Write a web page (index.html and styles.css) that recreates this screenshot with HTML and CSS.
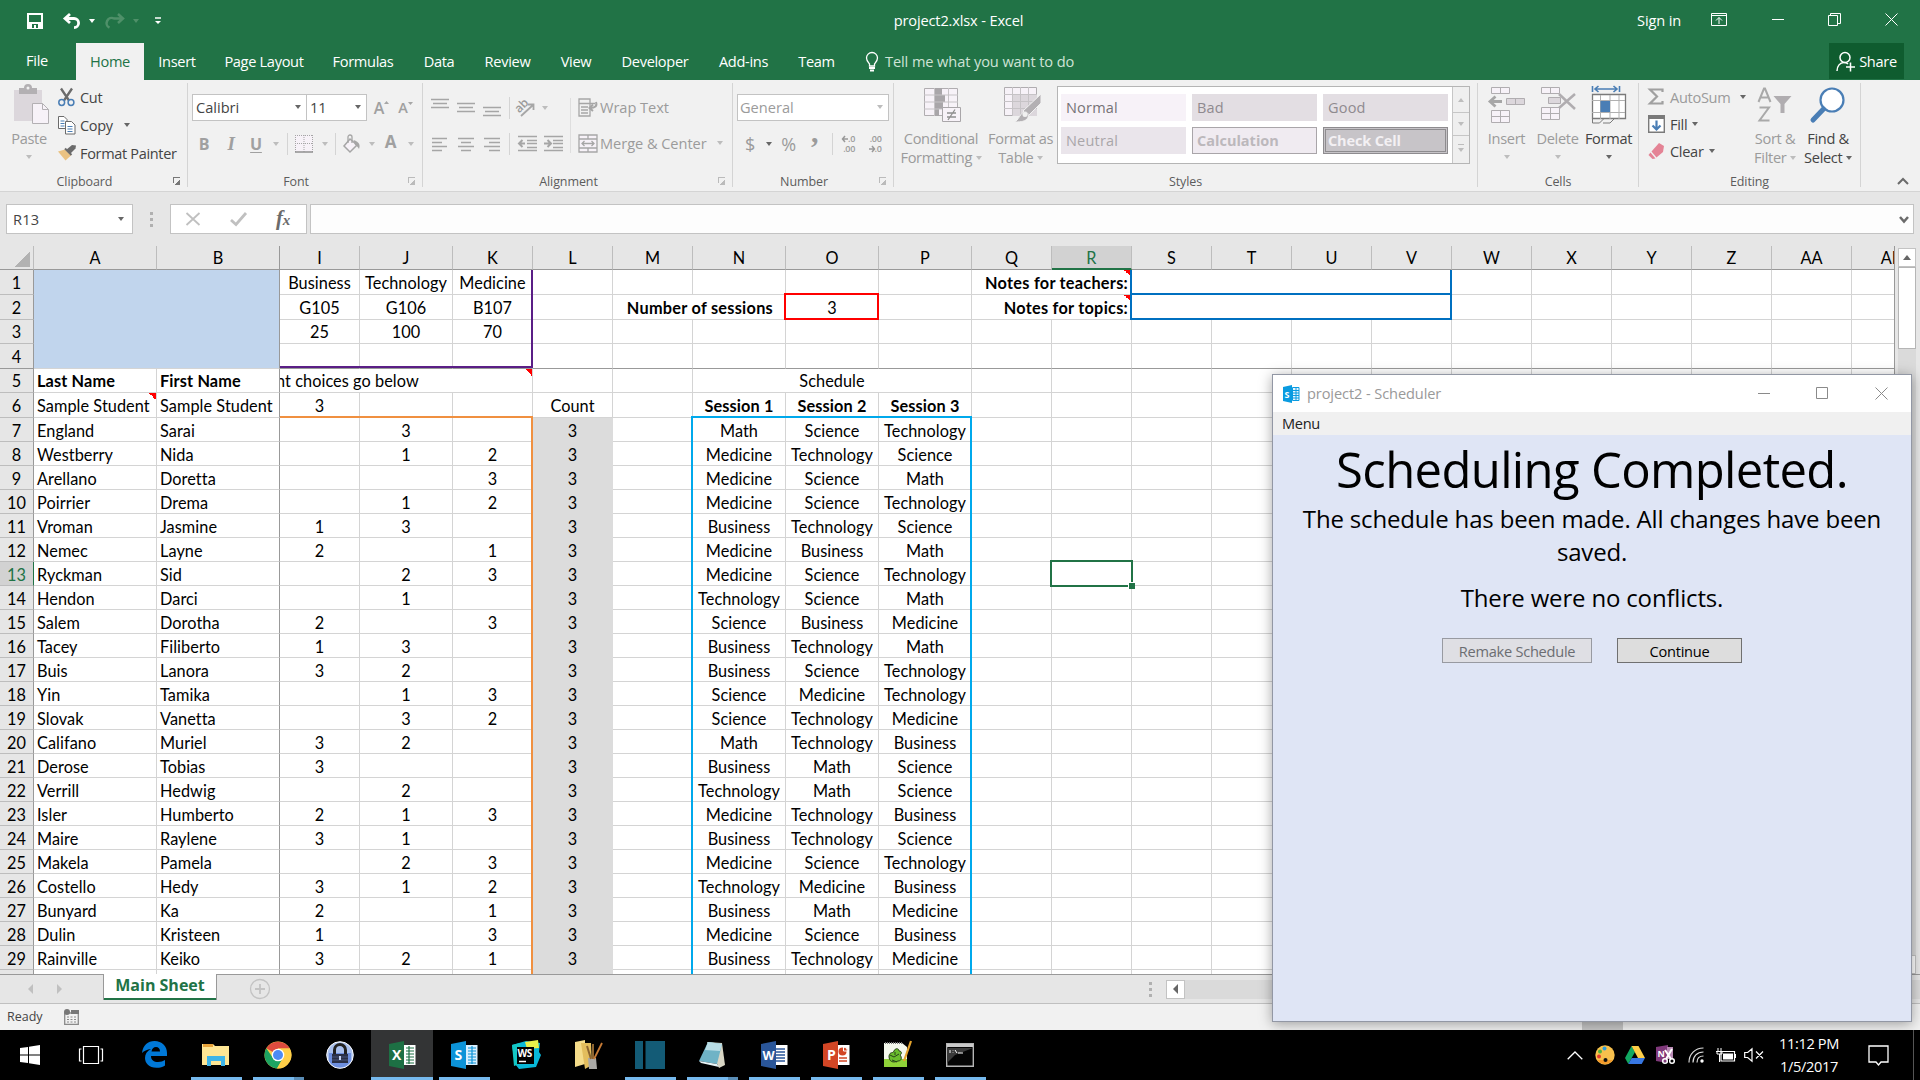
FILE: index.html
```html
<!DOCTYPE html>
<html lang="en">
<head>
<meta charset="utf-8">
<title>project2.xlsx - Excel</title>
<link rel="stylesheet" href="styles.css">
</head>
<body>
<div class="desktop">
  <header class="titlebar">
    <div class="quick">
      <svg width="16" height="16" viewBox="0 0 16 16"><path d="M1 1h14v14H1z" fill="none" stroke="#fff" stroke-width="2"/><path d="M1 9h14v6H1z" fill="#fff"/><path d="M5 11h6v4H5z" fill="#217346"/><path d="M7 12h2v3H7z" fill="#fff"/></svg>
      <svg width="19" height="16" viewBox="0 0 19 16"><path d="M7 1L2 5.500 7 10M2.500 5.500H11a4.600 4.600 0 0 1 0 9.200" fill="none" stroke="#fff" stroke-width="2.800"/></svg>
      <i class="caret white"></i>
      <svg width="19" height="16" viewBox="0 0 19 16"><path d="M12 1l5 4.500-5 4.500M16.500 5.500H8a4.600 4.600 0 0 0-4.500 9.200" fill="none" stroke="#4f9069" stroke-width="2.500"/></svg>
      <i class="caret redo"></i>
      <svg width="8" height="8" viewBox="0 0 8 8"><path d="M1 1h6" stroke="#fff" stroke-width="1.500"/><path d="M1 4h6L4 7z" fill="#fff"/></svg>
    </div>
    <div class="doc-name">project2.xlsx - Excel</div>
    <div class="win-tools">
      <span class="signin">Sign in</span>
      <svg width="16" height="14" viewBox="0 0 16 14" fill="none" stroke="#fff"><path d="M.5.500h15v12H.5zM.5 2.500h15M8 11V4.500M5 7.500l3-3 3 3"/></svg>
      <svg width="12" height="12" viewBox="0 0 12 12"><path d="M0 5.500h12" stroke="#fff"/></svg>
      <svg width="13" height="13" viewBox="0 0 13 13" fill="none" stroke="#fff"><path d="M.5 2.500h9v10h-9zM2.500 2V.5h10v10H10"/></svg>
      <svg width="13" height="13" viewBox="0 0 13 13"><path d="M.5.500l12 12m0-12l-12 12" stroke="#fff"/></svg>
    </div>
  </header>

  <nav class="tabs">
    <span class="file">File</span><span class="active">Home</span><span>Insert</span><span>Page Layout</span><span>Formulas</span><span>Data</span><span>Review</span><span>View</span><span>Developer</span><span>Add-ins</span><span>Team</span>
    <span class="tell">
      <svg width="14" height="20" viewBox="0 0 14 20" fill="none" stroke="#fff" stroke-width="1.300"><path d="M4.500 14v-2C3 10 1.500 8.500 1.500 6a5.500 5.500 0 0 1 11 0c0 2.500-1.500 4-3 6v2z"/><path d="M4 16h6M5 18.500h4" stroke-width="2"/></svg>
      Tell me what you want to do</span>
    <span class="share">
      <svg width="19" height="21" viewBox="0 0 19 21" fill="none" stroke="#fff" stroke-width="1.500"><circle cx="9" cy="6.500" r="5"/><path d="M1 20c0-5 3-8.500 7-8.500 2 0 3 .5 4 1.500M14.500 11.500v9M10 16h9"/></svg>
      Share</span>
  </nav>

  <section class="ribbon">
    <div class="group clipboard">
      <div class="body">
        <div class="big off paste">
          <svg width="36" height="40" viewBox="0 0 36 40"><path d="M0 5h28v31H0z" fill="#dcd7dc"/><path d="M5 3h5a4 4 0 0 1 8 0h5v6H5z" fill="#b3b0b3"/><circle cx="14" cy="3" r="1.500" fill="#f1f1f1"/><path d="M18.500 18.500h10l6 6v14h-16z" fill="#f7f2f8" stroke="#b3b0b3"/><path d="M28.500 18.500v6h6" fill="none" stroke="#b3b0b3"/></svg>
          <span>Paste</span><i class="caret light"></i>
        </div>
        <div class="stack">
          <div><svg width="17" height="19" viewBox="0 0 17 19" fill="none"><path d="M3 .5l8 12M14 .5l-8 12" stroke="#6b6b6b" stroke-width="2.300"/><circle cx="3.700" cy="14.500" r="2.900" stroke="#4a7eb5" stroke-width="1.500"/><circle cx="13" cy="14.500" r="2.900" stroke="#4a7eb5" stroke-width="1.500"/></svg>Cut</div>
          <div><svg width="18" height="19" viewBox="0 0 18 19" fill="#fff" stroke="#6b6b6b"><path d="M.5.500H6l3 3v9H.5z"/><path d="M2.500 5h4M2.500 7.500h4M2.500 10h4" stroke="#4a7eb5"/><path d="M7.500 5.500h6l3.500 3.500v9H7.500z"/><path d="M9.500 10.500h5M9.500 13h5M9.500 15.500h5" stroke="#4a7eb5"/></svg>Copy<i class="caret"></i></div>
          <div><svg width="18" height="16" viewBox="0 0 18 16"><path d="M8 5l6-5 4 .5-.5 3L12 9z" fill="#6b6b6b"/><path d="M0 6.500L7 4.500l6 6-5.500 5z" fill="#eac282"/><path d="M7 3.500l6.500 6.500" stroke="#6b6b6b" stroke-width="2"/></svg>Format Painter</div>
        </div>
      </div>
      <footer><span>Clipboard</span><i class="launch on"></i></footer>
    </div>

    <div class="group font">
      <div class="body col">
        <div class="row font-a">
          <span class="combo">Calibri<i class="caret"></i></span><span class="combo">11<i class="caret"></i></span>
          <span class="grow">A<svg width="5" height="3" viewBox="0 0 5 3"><path d="M0 3L2.500 0 5 3z" fill="#a6a6a6"/></svg></span>
          <span class="grow small">A<svg width="5" height="3" viewBox="0 0 5 3"><path d="M0 0L2.500 3 5 0z" fill="#a6a6a6"/></svg></span>
        </div>
        <div class="row font-b">
          <b>B</b><b class="serif">I</b><b class="under">U</b><i class="caret light"></i><i class="sep"></i>
          <svg width="18" height="18" viewBox="0 0 18 18"><path d="M0 0h18v17H0z" fill="#f7f2f8"/><path d="M.5 0v17M9 0v17M17.500 0v17M0 .5h18M0 8.500h18" stroke="#a6a6a6" stroke-dasharray="1 1"/><path d="M0 17h18" stroke="#8f8f8f" stroke-width="1.500"/></svg>
          <i class="caret light"></i><i class="sep"></i>
          <svg width="18" height="19" viewBox="0 0 18 19"><path d="M7 5l7 6-7 7-6-6z" fill="#f7f2f8" stroke="#a6a6a6" stroke-width="1.500"/><path d="M5 9V3a2 2 0 0 1 4 0v6" fill="none" stroke="#a6a6a6" stroke-width="1.300"/><path d="M10.500 6c6 2 7 5 5.500 9-1-2-2-3-4-4z" fill="#a6a6a6"/></svg>
          <i class="caret light"></i><b class="fa">A</b><i class="caret light"></i>
        </div>
      </div>
      <footer><span>Font</span><i class="launch"></i></footer>
    </div>

    <div class="group alignment">
      <div class="body align-grid">
        <div class="row al-a">
          <svg width="18" height="18" viewBox="0 0 18 18"><path d="M0 .5h18M2 4.500h14M0 8.500h18"/></svg>
          <svg width="18" height="18" viewBox="0 0 18 18"><path d="M0 4.500h18M2 8.500h14M0 12.500h18"/></svg>
          <svg width="18" height="18" viewBox="0 0 18 18"><path d="M0 8.500h18M2 12.500h14M0 16.500h18"/></svg>
          <i class="sep"></i>
          <svg class="orient" width="20" height="19" viewBox="0 0 20 19"><path d="M5 18L17 7M12 6.500h5.500V12" stroke-width="1.800"/><text x="1" y="14" transform="rotate(-45 4 12)" font-size="12" font-weight="600" stroke="none" fill="#9a9a9a">ab</text></svg>
          <i class="caret light near"></i>
        </div>
        <div class="row al-a">
          <svg width="18" height="16" viewBox="0 0 18 16"><path d="M1 2.500h15M1 6.500h10M1 10.500h15M1 14.500h10"/></svg>
          <svg width="18" height="16" viewBox="0 0 18 16"><path d="M1 2.500h16M4 6.500h10M1 10.500h16M4 14.500h10"/></svg>
          <svg width="18" height="16" viewBox="0 0 18 16"><path d="M1 2.500h16M6 6.500h11M1 10.500h16M6 14.500h11"/></svg>
          <i class="sep"></i>
          <svg width="19" height="17" viewBox="0 0 19 17"><path d="M0 1.500h19M9 5.500h10M9 8.500h10M9 12.500h10M0 15.500h19"/><path d="M1 8.500h6M4.500 5L1 8.500 4.500 12" stroke-width="2"/></svg>
          <svg width="19" height="17" viewBox="0 0 19 17"><path d="M0 1.500h19M9 5.500h10M9 8.500h10M9 12.500h10M0 15.500h19"/><path d="M0 8.500h6M3.500 5L7 8.500 3.500 12" stroke-width="2"/></svg>
        </div>
        <i class="tall-sep"></i>
        <div class="wrap off"><svg width="20" height="19" viewBox="0 0 20 19"><path d="M1 1h11v17H1zM1 5.500h16M3 9h7M3 12h7M3 15h7"/><path d="M18 4c1.500 4-1 6-6 6M15 6.500L11.500 10l3.500 3" stroke-width="2"/></svg>Wrap Text</div>
        <div class="merge off"><svg width="20" height="19" viewBox="0 0 20 19"><path d="M1 1h18v17H1zM1 5h18M1 14h18M10 1v4M10 14v4" fill="#f7f2f8"/><path d="M4 9.500h12M6.500 7L4 9.500 6.500 12M13.500 7L16 9.500 13.500 12"/></svg>Merge &amp; Center<i class="caret light"></i></div>
      </div>
      <footer><span>Alignment</span><i class="launch"></i></footer>
    </div>

    <div class="group number">
      <div class="body col">
        <div class="row"><span class="combo off">General<i class="caret light"></i></span></div>
        <div class="row num-b off">
          <span>$</span><i class="caret"></i><span>%</span><b>,</b><i class="sep"></i>
          <span class="dec"><span><svg width="6" height="6" viewBox="0 0 6 6"><path d="M0 3h6M3 0L.5 3 3 6" fill="none" stroke="#999" stroke-width="1.500"/></svg>.0</span><span>.00</span></span>
          <span class="dec"><span>.00</span><span><svg width="6" height="6" viewBox="0 0 6 6"><path d="M0 3h6M3 0l2.500 3L3 6" fill="none" stroke="#999" stroke-width="1.500"/></svg>.0</span></span>
        </div>
      </div>
      <footer><span>Number</span><i class="launch"></i></footer>
    </div>

    <div class="group styles">
      <div class="body">
        <div class="big off cond">
          <svg width="38" height="36" viewBox="0 0 38 36"><path d="M.5 1.500h33v27H.5z" fill="#f7f2f8" stroke="#b0adb0"/><path d="M10 1h8v7h-8zM10 8h11v7H10zM10 15h9v7h-9zM10 22h5v7h-5z" fill="#a9a6a9"/><path d="M0 8h34M0 15h34M0 22h34M10.500 1v28M24.500 1v28" stroke="#c6c3c6"/><path d="M18.500 20.500h18v14h-18z" fill="#f7f2f8" stroke="#a9a6a9"/><path d="M23 26h9M23 30h9M31 22.500l-7 10.500" stroke="#8f8f8f" stroke-width="1.300"/></svg>
          <span>Conditional</span><span>Formatting <i class="caret light"></i></span>
        </div>
        <div class="big off fmt-table">
          <svg width="38" height="36" viewBox="0 0 38 36"><path d="M.5.500h32v28H.5z" fill="#f7f2f8" stroke="#b0adb0"/><path d="M8 8h25v21H8z" fill="#dcd7dc"/><path d="M0 7.500h33M0 14.500h33M0 21.500h33M8.500 0v29M16.500 0v29M24.500 0v29" stroke="#c6c3c6"/><path d="M37 7v9L24 29l-5-5z" fill="#b3b0b3" stroke="#f1f1f1"/><path d="M10 35c5-1 6-10 11-10 4 0 4 5 2 7-3 3-8 3-13 3z" fill="#b3b0b3" stroke="#f1f1f1"/><circle cx="21" cy="27.500" r="2.500" fill="#f1f1f1"/></svg>
          <span>Format as</span><span>Table <i class="caret light"></i></span>
        </div>
        <div class="gallery">
          <div class="swatches">
            <span class="s-normal">Normal</span><span class="s-bad">Bad</span><span class="s-good">Good</span>
            <span class="s-neutral">Neutral</span><span class="s-calc">Calculation</span><span class="s-check">Check Cell</span>
          </div>
          <div class="scroller"><span><i class="caret light up"></i></span><span><i class="caret light"></i></span><span class="more"><i class="caret light"></i></span></div>
        </div>
      </div>
      <footer><span>Styles</span></footer>
    </div>

    <div class="group cells">
      <div class="body">
        <div class="big off"><svg width="38" height="38" viewBox="0 0 38 38" fill="#f7f2f8" stroke="#b0adb0"><path d="M3.500 1.500h18v6h-18zM12.500 1.500v6M3.500 24.500h18v12h-18zM12.500 24.500v12M3.500 30.500h18"/><path d="M18.500 12.500h18v6h-18zM27.500 12.500v6" fill="#dcd7dc"/><path d="M2 15.500h12M7.500 10.500L2 15.500l5.500 5" fill="none" stroke="#a6a6a6" stroke-width="2.800"/></svg><span>Insert</span><i class="caret light"></i></div>
        <div class="big off"><svg width="38" height="38" viewBox="0 0 38 38" fill="#f7f2f8" stroke="#b0adb0"><path d="M2.500 1.500h18v6h-18zM11.500 1.500v6M2.500 21.500h18v12h-18zM11.500 21.500v12M2.500 27.500h18"/><path d="M9.500 11.500h12v6h-12z" fill="#dcd7dc"/><path d="M20 8l16 15M36 8L20 22" fill="none" stroke="#b0adb0" stroke-width="2.500"/></svg><span>Delete</span><i class="caret light"></i></div>
        <div class="big"><svg width="36" height="38" viewBox="0 0 36 38" fill="none"><path d="M1.500 0v6M28.500 0v6M4 3h22M7.500 0L4 3l3.500 3M22.500 0L26 3l-3.500 3" stroke="#4a7eb5" stroke-width="1.600"/><path d="M1.500 8.500h33v24h-33z" fill="#fff" stroke="#7a7a7a" stroke-width="1.300"/><path d="M1 14.500h33M1 26.500h33M9.500 9v24M19 9v24M28 9v24" stroke="#b0b0b0"/><path d="M9.500 15h9.500v11H9.500z" fill="#4a7eb5"/><path d="M1.500 33v4h7l4-4M12 37h7l4-4" stroke="#7a7a7a"/></svg><span>Format</span><i class="caret"></i></div>
      </div>
      <footer><span>Cells</span></footer>
    </div>

    <div class="group editing">
      <div class="body">
        <div class="stack">
          <div class="off"><svg width="16" height="17" viewBox="0 0 16 17"><path d="M14.500 4V1.500H2L9 8.500l-7 7h12.500V13" fill="none" stroke="#a0a0a0" stroke-width="2.200"/></svg>AutoSum<i class="caret far"></i></div>
          <div><svg width="17" height="18" viewBox="0 0 17 18"><path d="M.7.700h15.600v16.600H.7z" fill="#fff" stroke="#7a7a7a" stroke-width="1.400"/><path d="M0 0h17v4H0z" fill="#7a7a7a"/><path d="M8.500 5.500v9M4.500 10.500l4 4 4-4" fill="none" stroke="#4a7eb5" stroke-width="2.200"/></svg>Fill<i class="caret"></i></div>
          <div><svg width="17" height="16" viewBox="0 0 17 16"><path d="M11 0l5 3-1 6-6.500 5.500-5-6z" fill="#e48395"/><path d="M2.500 9.500l5 6-3 .5L.5 12z" fill="#e48395"/></svg>Clear<i class="caret"></i></div>
        </div>
        <div class="big off sort"><svg width="36" height="36" viewBox="0 0 36 36"><path d="M1.500 15L7 1.500h1L13.500 15M3.500 10.500h8M2.500 20.500h9.500L2.500 33.500h10" fill="none" stroke="#a9a9a9" stroke-width="2"/><path d="M16.500 9h18l-7 8v9h-4v-9z" fill="#b0adb0"/></svg><span>Sort &amp;</span><span>Filter <i class="caret light"></i></span></div>
        <div class="big find"><svg width="36" height="36" viewBox="0 0 36 36"><circle cx="22" cy="13" r="11.500" fill="#fff" stroke="#4a7eb5" stroke-width="2.200"/><path d="M13.500 22L3 33" stroke="#4a7eb5" stroke-width="5" stroke-linecap="round"/></svg><span>Find &amp;</span><span>Select <i class="caret"></i></span></div>
      </div>
      <footer><span>Editing</span></footer>
    </div>
    <div class="collapse"><svg width="12" height="8" viewBox="0 0 12 8"><path d="M1 7l5-5 5 5" fill="none" stroke="#6b6b6b" stroke-width="2"/></svg></div>
  </section>

  <section class="formula">
    <div class="name-box">R13<i class="caret"></i></div>
    <div class="dots"><i></i><i></i><i></i></div>
    <div class="fx">
      <svg width="16" height="14" viewBox="0 0 16 14"><path d="M1.500 1l13 12m0-12l-13 12" stroke="#c0c0c0" stroke-width="1.800"/></svg>
      <svg width="17" height="14" viewBox="0 0 17 14"><path d="M1 8l5 4.500L16 1" fill="none" stroke="#c0c0c0" stroke-width="2.800"/></svg>
      <em>f<small>x</small></em>
    </div>
    <div class="input"><svg width="10" height="7" viewBox="0 0 10 7"><path d="M1 1l4 4.500L9 1" fill="none" stroke="#6b6b6b" stroke-width="2.500"/></svg></div>
  </section>

  <main class="workspace">
    <div class="sheet">
      <table id="grid"></table>
      <i class="range r-topics"></i><i class="range r-count"></i><i class="range r-notes1"></i><i class="range r-notes2"></i>
      <i class="range r-choices"></i><i class="range r-schedule"></i><i class="range r-cursor"></i>
    </div>
    <div class="vbar"><span class="btn"><i class="caret up"></i></span><span class="thumb"></span><span class="track"></span><span class="btn"><i class="caret"></i></span></div>
  </main>

  <section class="sheet-tabs">
    <i class="nav-arrow left"></i><i class="nav-arrow right"></i>
    <span class="sheet-tab">Main Sheet</span>
    <svg width="22" height="22" viewBox="0 0 22 22" fill="none" stroke="#c3c3c3"><circle cx="11" cy="11" r="9.500" stroke-width="1.300"/><path d="M11 6v10M6 11h10" stroke-width="1.800"/></svg>
    <div class="dots"><i></i><i></i><i></i></div>
    <div class="hbar"><span><i class="nav-arrow left dark"></i></span></div>
  </section>
  <section class="status"><span>Ready</span>
    <svg width="15" height="16" viewBox="0 0 15 16"><path d="M.7 4h13.600v11.300H.7z" fill="none" stroke="#8a8a8a" stroke-width="1.300"/><path d="M7 1h8v4H7z" fill="#777"/><circle cx="3" cy="3" r="3" fill="#777"/><path d="M3 8h9M3 10.500h9M3 13h9" stroke="#8a8a8a" stroke-dasharray="2 1.500"/></svg>
    <i class="view-on"></i>
  </section>

  <section class="taskbar">
    <span class="app start"><svg width="20" height="20" viewBox="0 0 20 20" fill="#fff"><path d="M0 3l8-1v7.500H0zM9 1.800L20 0v9.500H9zM0 10.500h8V18l-8-1zM9 10.500h11V20L9 18.200z"/></svg></span>
    <span class="app view"><svg width="24" height="18" viewBox="0 0 24 18" fill="none" stroke="#fff"><path d="M4.500.500h15v17h-15zM2.500 3H.5v12h2M21.500 3h2v12h-2" stroke-width="1.200"/></svg></span>
    <span class="app"><svg width="25" height="27" viewBox="0 0 25 27"><path d="M0 12C1 4 6 0 12.500 0 20 0 25 5 25 12v3H9c0 4 3 6 7 6 3 0 5-.8 7-2v5.500c-2 1.500-5 2.300-8.500 2.300C7 26.800 3 22 3 17c0-4 2-7 6-9-4 .5-7 2-9 4zm9.500-1.500H18C18 7.500 16.500 6 14 6s-4 1.500-4.500 4.500z" fill="#0078d7"/></svg></span>
    <span class="app open"><svg width="28" height="24" viewBox="0 0 28 24"><path d="M0 1h11l2 2h14v19H0z" fill="#ffe694"/><path d="M1 1h10v3H1z" fill="#e8a33a"/><path d="M5 23V13h18v10h-4v-5H9v5z" fill="#3fb5e8"/></svg></span>
    <span class="app open multi"><svg width="28" height="28" viewBox="0 0 28 28"><circle cx="14" cy="14" r="13.500" fill="#ffcf48"/><path d="M14 14L2.300 7.300A13.500 13.500 0 0 1 25.700 7.500H14z" fill="#dd4b3e"/><path d="M2.300 7.300A13.500 13.500 0 0 0 13 27.500l6-10.500H9z" fill="#1da462"/><path d="M14 7.500h11.700A13.500 13.500 0 0 1 13 27.500L19 17z" fill="#ffcf48"/><circle cx="14" cy="14" r="6.300" fill="#fff"/><circle cx="14" cy="14" r="5" fill="#4c8bf5"/></svg></span>
    <span class="app"><svg width="28" height="28" viewBox="0 0 28 28"><circle cx="14" cy="14" r="13.300" fill="#a9c0ee" stroke="#fff"/><path d="M3 20a12.500 12.500 0 0 0 22 0V12H3z" fill="#6d8fe0"/><path d="M8.500 13V9a5.500 5.500 0 0 1 11 0v4" fill="none" stroke="#222" stroke-width="3"/><path d="M6 13h16v9H6z" fill="#2a3047"/><path d="M6 16h16M6 19h16" stroke="#47557e"/><path d="M13 15h2v4h-2z" fill="#c6d3f4"/></svg></span>
    <span class="app open current"><svg width="27" height="28" viewBox="0 0 27 28"><path d="M0 3l15-3v28L0 25z" fill="#1d7044"/><path d="M15 4h11.500v20H15z" fill="#fff"/><path d="M17 7h8M17 10h8M17 13h8M17 16h8M17 19h8M17 22h8M20 5v18" stroke="#1d7044" stroke-width="1.200"/><text x="3" y="19" font-size="14" font-weight="700" fill="#fff">X</text></svg></span>
    <span class="app open"><svg width="27" height="28" viewBox="0 0 27 28"><path d="M0 3l15-3v28L0 25z" fill="#0c93d8"/><path d="M15 4h11.500v20H15z" fill="#d8efff"/><path d="M17 7h8M17 10h8M17 13h8M17 16h8M17 19h8M17 22h8M21 5v18" stroke="#0c93d8" stroke-width="1.200"/><text x="3.500" y="19" font-size="14" font-weight="700" fill="#fff">S</text></svg></span>
    <span class="app"><svg width="30" height="30" viewBox="0 0 30 30"><path d="M1 5l14-4 14 2-1 9 2 3-5 12-17 2-4-5z" fill="#08b8d8"/><path d="M14 2l13-2 1 8-12 1z" fill="#e8f04a"/><path d="M1 5l8-2 3 20-9 3z" fill="#13c7c5"/><path d="M6 7h17v17H6z" fill="#000"/><text x="6.500" y="16.500" font-size="10" font-weight="700" fill="#fff">WS</text><path d="M8 21.500h7" stroke="#fff" stroke-width="1.500"/></svg></span>
    <span class="app"><svg width="30" height="30" viewBox="0 0 30 30"><path d="M2 2l10-2v24l-10 3z" fill="#f5dc8a"/><path d="M8 3h10l1 22-7 4z" fill="#e3bd5d"/><path d="M15 18h8l1 11h-8z" fill="#aaa9a6"/><path d="M18 19L14 6M20 19V4" stroke="#8c6430" stroke-width="2"/><path d="M21 19l8-16" stroke="#c77b35" stroke-width="1.800"/></svg></span>
    <span class="app open"><svg width="30" height="28" viewBox="0 0 30 28" fill="#135b76"><path d="M0 0h8v28H0zM10.500 0H30v28H10.500z"/></svg></span>
    <span class="app open multi"><svg width="28" height="27" viewBox="0 0 28 27"><path d="M9 1l15 1 3 22-6 3z" fill="#d8d5c4"/><path d="M10 1l14 2-5 20-18-3z" fill="#6fb3c6"/><path d="M10 1l14 2-2 7-15-1z" fill="#b9dde6"/><path d="M1 20l18 3 2 3L3 22z" fill="#e8f4f7"/></svg></span>
    <span class="app open"><svg width="27" height="28" viewBox="0 0 27 28"><path d="M0 3l15-3v28L0 25z" fill="#2a5699"/><path d="M15 4h11.500v20H15z" fill="#fff"/><path d="M15 8h9M15 11h9M15 14h9M15 17h9M15 20h9" stroke="#2a5699" stroke-width="1.500"/><text x="1.500" y="18.500" font-size="12.500" font-weight="700" fill="#fff">W</text></svg></span>
    <span class="app open"><svg width="27" height="28" viewBox="0 0 27 28"><path d="M0 3l15-3v28L0 25z" fill="#d24625"/><path d="M15 4h11.500v20H15z" fill="#fff"/><path d="M16 17h8M16 20h8" stroke="#d24625" stroke-width="1.500"/><circle cx="19.500" cy="10.500" r="4" fill="#d24625"/><path d="M20.500 10V6a4 4 0 0 1 4 4z" fill="#d24625" stroke="#fff"/><text x="4" y="19" font-size="14" font-weight="700" fill="#fff">P</text></svg></span>
    <span class="app open"><svg width="28" height="30" viewBox="0 0 28 30"><path d="M0 3h18l5 4v20H0z" fill="#f4f8ec"/><path d="M0 19h23v8H0z" fill="#8fd238"/><path d="M1 3h17" stroke="#777" stroke-width="2" stroke-dasharray="1 1"/><path d="M5 16c1-5 4-2 5-5 1-3 5-3 5 0 3 0 3 3 1 4 2 2 2 6-2 6-5 2-9 1-9-5z" fill="#6bbd2d" stroke="#28401a"/><path d="M6 15l4 2 5-3M8 20l5 2M11 12v3" stroke="#28401a" fill="none"/><path d="M27 1l-7 20" stroke="#e4a32c" stroke-width="2.200"/></svg></span>
    <span class="app open"><svg width="28" height="24" viewBox="0 0 28 24"><path d="M.7.700h26.600v22.600H.7z" fill="#050505" stroke="#b5b5b5" stroke-width="1.400"/><path d="M1 1h26v3H1z" fill="#c9c9c9"/><path d="M1 5h26L9 12l-8 8z" fill="#3a3a3a"/><path d="M4 7v3M7 7v.5M7 9.500v.5M9 7l2 3M12 10h5" stroke="#fff"/></svg></span>
    <div class="tray">
      <svg width="16" height="9" viewBox="0 0 16 9"><path d="M.7 8.300L8 1l7.300 7.300" fill="none" stroke="#fff" stroke-width="1.300"/></svg>
      <svg width="20" height="20" viewBox="0 0 20 20"><circle cx="10" cy="10" r="9.700" fill="#f8c14d"/><path d="M2 15a10 10 0 0 0 16 0z" fill="#f39b2b"/><circle cx="9.500" cy="3.500" r="2" fill="#2f9fe0"/><circle cx="5" cy="6.500" r="2" fill="#4fb43f"/><circle cx="4" cy="11.500" r="2" fill="#e2392d"/><circle cx="10.500" cy="15" r="2" fill="#111"/></svg>
      <svg width="20" height="18" viewBox="0 0 20 18"><path d="M6.500 0L0 12l3.300 6L10 6z" fill="#11a861"/><path d="M6.500 0h7L20 12h-7z" fill="#ffcf48"/><path d="M6.700 12H20l-3.300 6H3.300z" fill="#3777e3"/></svg>
      <svg width="19" height="20" viewBox="0 0 19 20"><path d="M0 2l12-2v18L0 16z" fill="#80397b"/><path d="M11 2h6v12h-6z" fill="#b98bb5"/><text x="1.500" y="12" font-size="9" font-weight="700" fill="#fff">N</text><path d="M9 5l6 9M16 4l-6 10" stroke="#fff" stroke-width="2"/><circle cx="9" cy="16" r="2.300" fill="none" stroke="#fff" stroke-width="1.500"/><circle cx="16" cy="16" r="2.300" fill="none" stroke="#fff" stroke-width="1.500"/></svg>
      <svg width="17" height="16" viewBox="0 0 17 16" fill="none" stroke="#ddd" stroke-width="1.200"><path d="M1 15.500C1 7 7 1 15.500 1M5 15.500C5 9 9 5 15.500 5M9 15.500C9 11.500 11.500 9 15.500 9"/><circle cx="14" cy="14" r="1.700" fill="#fff" stroke="none"/></svg>
      <svg width="21" height="15" viewBox="0 0 21 15"><path d="M5 3.500h13.500v9.500H5z" fill="none" stroke="#fff" stroke-width="1.200"/><path d="M7 5.500h10v6H7z" fill="#fff"/><path d="M19.500 6v4M2 0v3M5 0v3M0 3.500h7M1 3v3h5V3M3.500 6v8" stroke="#fff" fill="none"/></svg>
      <svg width="20" height="14" viewBox="0 0 20 14" fill="none" stroke="#fff" stroke-width="1.200"><path d="M.7 4.500h3L8 .8v12.400L3.700 9.500h-3zM12 3.500l7 7m0-7l-7 7"/></svg>
      <div class="clock"><span>11:12 PM</span><span>1/5/2017</span></div>
      <svg width="22" height="21" viewBox="0 0 22 21"><path d="M1 1h19v16h-7l-2.500 3L8 17H1z" fill="none" stroke="#fff" stroke-width="1.300"/></svg>
      <i class="peek"></i>
    </div>
  </section>

  <aside class="dialog">
    <header>
      <svg width="17" height="18" viewBox="0 0 17 18"><path d="M0 2l9-2v18L0 16z" fill="#0a9be0"/><path d="M9.500 2.500h6.500v13H9.500z" fill="#e8f6ff" stroke="#0a9be0"/><path d="M10 5.500h6M10 8h6M10 10.500h6M10 13h6M13 3v12" stroke="#0a9be0"/><text x="1.500" y="12.500" font-size="9" font-weight="700" fill="#fff">S</text></svg>
      <span>project2 - Scheduler</span>
      <svg width="12" height="12" viewBox="0 0 12 12"><path d="M0 5.500h12" stroke="#8a8a8a"/></svg>
      <svg width="13" height="13" viewBox="0 0 13 13"><path d="M.5.500h11v11H.5z" fill="none" stroke="#8a8a8a"/></svg>
      <svg width="13" height="13" viewBox="0 0 13 13"><path d="M.5.500l12 12m0-12l-12 12" stroke="#8a8a8a"/></svg>
    </header>
    <div class="menu">Menu</div>
    <div class="message">
      <h1>Scheduling Completed.</h1>
      <p>The schedule has been made. All changes have been saved.</p>
      <p>There were no conflicts.</p>
      <div class="actions"><span class="disabled">Remake Schedule</span><span>Continue</span></div>
    </div>
  </aside>
</div>
<script src="script.js"></script>
</body>
</html>
```
FILE: styles.css
```css
* { box-sizing: border-box; }
body { margin: 0; overflow: hidden; font-family: "Open Sans", "Noto Sans", sans-serif; font-size: 14.600px; letter-spacing: -.32px; color: #444; }
svg { flex: none; display: block; overflow: visible; }
i { font-style: normal; }
.desktop { position: relative; width: 1920px; height: 1080px; display: flex; flex-direction: column; }

.caret { display: inline-block; flex: none; width: 0; height: 0; border: 3.500px solid transparent; border-top: 4px solid #666; border-bottom: 0; }
.caret.light { border-top-color: #bdbdbd; }
.caret.white { border-top-color: #fff; }
.caret.redo { border-top-color: #4f9069; }
.caret.up { border-top: 0; border-bottom: 4px solid #bdbdbd; }

/* Title bar */
.titlebar { height: 43px; flex: none; background: #217346; color: #fff; display: grid; grid-template-columns: 200px 1fr 283px; align-items: center; padding-bottom: 4px; }
.quick { display: grid; grid-template-columns: 44px 30px 10px 36px 6px 38px; padding: 2px 0 0 13px; place-items: center; }
.doc-name { text-align: center; padding-left: 80px; letter-spacing: -.15px; }
.win-tools { display: grid; grid-template-columns: 44px 76px 41px 72px 43px; align-items: center; justify-items: center; }
.signin { white-space: nowrap; letter-spacing: -.15px; }

/* Ribbon tabs */
.tabs { height: 37px; flex: none; background: #217346; color: #fff; display: grid; grid-template-columns: 76px 68px 66px 108px 90px 62px 75px 62px 96px 81px 65px 980px 75px; text-align: center; line-height: 37px; white-space: nowrap; }
.tabs .file { padding-right: 2px; line-height: 35px; }
.tabs .active { background: #f1f1f1; color: #217346; }
.tabs .tell { display: flex; gap: 6px; align-items: center; padding-left: 16px; color: #cfe3d7; letter-spacing: -.1px; }
.tabs .share { background: #0f5c2f; height: 36px; display: flex; align-items: center; justify-content: center; gap: 4px; line-height: 40px; }

/* Ribbon */
.ribbon { height: 112px; flex: none; background: #f1f1f1; border-bottom: 1px solid #d4d4d4; display: flex; white-space: nowrap; }
.group { display: flex; flex-direction: column; position: relative; border-right: 1px solid #d4d4d4; border-image: linear-gradient(transparent 4px, #d4d4d4 4px, #d4d4d4 106px, transparent 106px) 1; }
.group footer { height: 21px; padding-top: 1px; display: flex; align-items: center; text-align: center; font-size: 12.500px; letter-spacing: -.1px; color: #5c5c5c; }
.group footer span { flex: 1; }
.launch { width: 18px; height: 8px; background: linear-gradient(#bbb, #bbb) 4px 0 / 7px 1px no-repeat, linear-gradient(#bbb, #bbb) 4px 0 / 1px 6px no-repeat, linear-gradient(135deg, transparent 45%, #bbb 46%) 6px 3px / 5px 5px no-repeat; }
.launch.on { background: linear-gradient(#777, #777) 4px 0 / 7px 1px no-repeat, linear-gradient(#777, #777) 4px 0 / 1px 6px no-repeat, linear-gradient(135deg, transparent 45%, #777 46%) 6px 3px / 5px 5px no-repeat; }
.body { height: 90px; display: flex; }
.body.col { flex-direction: column; padding-top: 14px; gap: 9px; }
.clipboard { width: 188px; }
.font { width: 235px; }
.alignment { width: 310px; }
.number { width: 161px; }
.styles { width: 584px; }
.cells { width: 161px; }
.editing { width: 222px; }
.off { color: #9b9b9b; }
.big { display: grid; grid-template-rows: 49px 19px 19px; justify-items: center; align-items: center; line-height: 19px; }
.big .caret { margin-bottom: 1px; }
.big span .caret { margin-bottom: 3px; }
.paste { width: 58px; padding: 0; }
.paste svg { margin-left: 5px; }
.stack { display: flex; flex-direction: column; padding-top: 3px; }
.stack div { height: 28px; display: grid; grid-template-columns: 22px auto auto; align-items: center; justify-content: start; }
.stack .caret { margin-left: 11px; }
.clipboard .stack { font-size: 14.500px; }
.editing .stack .caret { margin-left: 5px; }
.editing .stack .caret.far { margin-left: 10px; }
.row { height: 27px; display: grid; align-items: center; justify-items: center; }
.combo { justify-self: stretch; height: 27px; background: #fff; border: 1px solid #c3c3c3; display: flex; justify-content: space-between; align-items: center; padding: 0 5px 1px 2px; letter-spacing: 0; }
.font-a { grid-template-columns: 115px 60px 26px 25px; margin-left: 4px; }
.font-a .combo { padding-left: 3px; }
.font-a .combo + .combo { margin-left: -1px; }
.grow { display: flex; color: #a0a0a0; font-size: 16px; font-weight: 600; padding-left: 3px; }
.grow.small { font-size: 14.500px; padding-left: 0; }
.grow svg { margin-top: 4px; }
.sep { width: 1px; height: 22px; background: #d4d4d4; }
.font-b { grid-template-columns: 28px 26px 24px 16px 6px 28px 13px 8px 26px 13px 25px 15px; margin-left: 2px; color: #a0a0a0; font-size: 16px; }
.serif { font-family: "Liberation Serif", serif; font-style: italic; font-size: 19px; }
.under { text-decoration: underline; text-underline-offset: 2px; }
.fa { font-size: 17px; margin-top: -5px; }
.align-grid { display: grid; grid-template: 27px 27px / 142px 12px 1fr; row-gap: 9px; padding-top: 14px; height: 90px; }
.align-grid svg { fill: none; stroke: #a6a6a6; stroke-width: 1.300; }
.al-a { grid-template-columns: 26px 26px 26px 8px 29px 23px; margin-left: 4px; grid-column: 1; }
.al-a .near { margin-right: 18px; }
.orient { margin-right: 3px; }
.tall-sep { grid-row: 1 / 3; grid-column: 2; width: 1px; height: 55px; background: #dedede; margin: 4px 0 0 5px; }
.wrap, .merge { grid-column: 3; display: flex; align-items: center; gap: 2px; padding: 0 0 1px 1px; letter-spacing: -.05px; }
.wrap { grid-row: 1; }
.merge { grid-row: 2; }
.merge .caret { margin-left: 8px; }
.align-grid .al-a:nth-child(1) { grid-row: 1; }
.align-grid .al-a:nth-child(2) { grid-row: 2; }
.number .row:first-child { margin: 0 4px; }
.num-b { grid-template-columns: 22px 16px 23px 29px 6px 27px 26px; justify-content: start; margin-left: 6px; font-size: 18px; }
.num-b b { font: 700 30px/27px "Liberation Serif", serif; margin-top: -24px; }
.dec { display: flex; flex-direction: column; align-items: flex-end; font-size: 9px; line-height: 10px; font-weight: 600; }
.dec span { display: flex; align-items: center; }
.cond { width: 94px; }
.fmt-table { width: 65px; }
.cond svg { margin-left: 3px; }
.fmt-table svg { margin-left: 4px; }
.gallery { margin: 6px 0 0 4px; width: 413px; height: 78px; border: 1px solid #b5b5b5; background: #fff; display: flex; }
.swatches { display: grid; grid-template: 27px 27px / 125px 125px 125px; gap: 6px; padding: 7px 4px 8px 3px; }
.swatches span { padding-left: 5px; line-height: 28px; font-size: 14.500px; letter-spacing: .2px; color: #8f8a8f; background: #e3dee3; }
.swatches .s-normal { background: #f7f2f8; color: #767376; }
.swatches .s-neutral { background: #eae5eb; color: #a9a5a9; }
.swatches .s-calc { background: #f0ebf1; border: 1px solid #a9a5a9; color: #bcb8bc; font-weight: 700; line-height: 26px; padding-left: 4px; letter-spacing: 0; }
.swatches .s-check { background: #c7c4c8; border: 3px double #8e8c8f; color: #f3f0f3; font-weight: 700; line-height: 22px; padding-left: 2px; letter-spacing: -.15px; }
.scroller { width: 19px; display: grid; grid-template-rows: 26px 23px 27px; background: #efefef; border-left: 1px solid #c6c6c6; }
.scroller span { display: flex; justify-content: center; align-items: center; border-bottom: 1px solid #c6c6c6; }
.scroller span:last-child { border: 0; }
.more .caret { position: relative; }
.more .caret::before { content: ""; position: absolute; left: -3px; top: -8px; width: 6px; height: 1px; background: #bdbdbd; }
.cells .big { width: 51px; }
.cells .body { padding-left: 3px; }
.editing .stack { padding: 3px 0 0 9px; width: 109px; }
.editing .stack div { height: 27px; }
.sort, .find { width: 54px; }
.find { margin-left: -1px; }
.collapse { flex: 1; display: flex; justify-content: flex-end; align-items: flex-end; padding: 0 11px 6px 0; }

/* Formula bar */
.formula { height: 54px; flex: none; background: #e6e6e6; display: flex; padding: 12px 6px 12px; }
.formula > div { height: 30px; }
.name-box { width: 127px; background: #fff; border: 1px solid #c3c3c3; display: flex; align-items: center; justify-content: space-between; padding: 0 8px 0 6px; letter-spacing: .2px; }
.dots { display: flex; flex-direction: column; justify-content: center; gap: 3px; width: 3px; }
.dots i { width: 3px; height: 3px; background: #b0b0b0; }
.formula .dots { margin: 0 17px 0 17px; }
.fx { width: 137px; background: #fff; border: 1px solid #c3c3c3; display: grid; grid-template-columns: 44px 46px 44px; place-items: center; }
.fx em { font: italic 700 21px/26px "Liberation Serif", serif; color: #6b6b6b; }
.fx small { font-size: 15px; }
.input { flex: 1; margin-left: 3px; background: #fdfdfd; border: 1px solid #c3c3c3; display: flex; align-items: center; justify-content: flex-end; padding-right: 4px; }

/* Worksheet */
.workspace { height: 728px; flex: none; background: #e6e6e6; display: flex; overflow: hidden; }
.sheet { position: relative; width: 1895px; height: 728px; overflow: hidden; background: #fff; border-right: 1px solid #999; }
table { border-collapse: separate; border-spacing: 0; table-layout: fixed; font-family: Lato, Carlito, sans-serif; font-size: 16.300px; letter-spacing: .06px; color: #000; }
td, th { padding: 1px 0 0; overflow: hidden; white-space: nowrap; text-align: center; line-height: 20px; border-right: 1px solid #d4d4d4; border-bottom: 1px solid #d4d4d4; }
th { background: #e6e6e6; font-weight: 400; border-color: #bdbdbd; }
thead th { height: 24px; border-bottom-color: #999; }
tbody th { border-right-color: #999; }
th.on { background: #d2d2d2; color: #217346; }
thead th.on { border-bottom: 2px solid #217346; }
tbody th.on { border-right-color: #217346; }
thead th.corner { background: linear-gradient(135deg, transparent 50%, #b2b2b2 50%) 14px 6px / 16px 15px no-repeat #e6e6e6; }
tbody tr:nth-child(n+7) > * { padding-top: 2px; }
.c-b { border-right-color: #999; }
.frozen td, .frozen th { border-bottom-color: #999; }
.left { text-align: left; padding-left: 3px; }
.right { text-align: right; padding-right: 3px; }
.bold { font-weight: 700; letter-spacing: .14px; }
.right.bold { letter-spacing: .26px; }
.blue { background: #c1d5ed; }
.gray { background: #dcdcdc; border-color: #dcdcdc; }
.note { background: linear-gradient(45deg, transparent 50%, #f00 50%) right top / 7px 7px no-repeat; }
.clip { text-align: left; }
.clip span { margin-left: -4px; }
.right.sessions { padding-right: 12px; }
.range { position: absolute; border: 2px solid; }
.r-topics { left: 260px; top: 0; width: 273px; height: 122px; border-color: #5a1e86; clip-path: inset(24px 0 0 20px); }
.r-count { left: 784px; top: 47px; width: 95px; height: 27px; border-color: #f00; }
.r-notes1, .r-notes2 { left: 1130px; width: 322px; border-color: #0070c0; }
.r-notes1 { top: 22px; height: 27px; clip-path: inset(2px 0 0); }
.r-notes2 { top: 47px; height: 27px; }
.r-choices { left: 260px; top: 170px; width: 273px; height: 570px; border-color: #f09040; clip-path: inset(0 0 0 20px); }
.r-schedule { left: 691px; top: 170px; width: 281px; height: 570px; border-color: #00a9ec; }
.r-cursor { left: 1050px; top: 314px; width: 83px; height: 27px; border-color: #217346; }
.r-cursor::after { content: ""; position: absolute; right: -4px; bottom: -4px; width: 6px; height: 6px; background: #217346; box-shadow: -1px -1px 0 #fff; }
.vbar { width: 18px; margin-left: 3px; display: flex; flex-direction: column; padding-top: 2px; }
.vbar .btn { height: 19px; background: #fff; border: 1px solid #c3c3c3; display: flex; align-items: center; justify-content: center; }
.vbar .up { border-bottom: 5px solid #666; border-left-width: 4px; border-right-width: 4px; }
.thumb { height: 82px; background: #fff; border: 1px solid #b5b5b5; }
.track { flex: 1; background: #dadada; }

/* Sheet tabs and status */
.sheet-tabs { height: 30px; flex: none; background: #e6e6e6; border-top: 1px solid #999; border-bottom: 1px solid #c0c0c0; display: flex; align-items: center; }
.nav-arrow { border: 5px solid transparent; border-left-width: 0; border-right: 5px solid #c0c0c0; }
.nav-arrow.left { margin-left: 28px; }
.nav-arrow.right { border-right-width: 0; border-left: 5px solid #c0c0c0; margin-left: 24px; }
.sheet-tabs > .left { padding: 0; margin-left: 28px; }
.sheet-tab { align-self: flex-start; margin: -1px 32px 0 38px; width: 114px; height: 26px; background: #fff; border: solid #999; border-width: 0 1px; box-shadow: inset 0 -2px #217346; color: #217346; font-weight: 700; font-size: 16px; line-height: 22px; text-align: center; letter-spacing: 0; white-space: nowrap; }
.sheet-tabs .dots { margin-left: 878px; }
.hbar { flex: 1; margin-left: 14px; height: 19px; background: #dadada; }
.hbar span { display: flex; align-items: center; justify-content: center; width: 19px; height: 19px; background: #fff; border: 1px solid #c3c3c3; }
.hbar .nav-arrow.dark { margin: 0; padding: 0; border-right-color: #666; border-width: 5px 5px 5px 0; }
.status { height: 26px; flex: none; background: #f1f1f1; display: flex; align-items: center; padding-left: 7px; font-size: 12.500px; letter-spacing: 0; }
.status span { width: 57px; padding-bottom: 2px; }
.view-on { width: 41px; height: 26px; background: #c6c6c6; margin-left: 1503px; }

/* Taskbar */
.taskbar { height: 50px; flex: none; background: #000; display: flex; color: #fff; }
.app { width: 62px; flex: none; display: flex; align-items: center; justify-content: center; padding-bottom: 1px; }
.app.start { width: 60px; }
.app.view { width: 61px; margin-right: 2px; }
.app.open { background: linear-gradient(#76b9ed, #76b9ed) 6px 100% / 51px 3px no-repeat; }
.app.multi { background: linear-gradient(90deg, #76b9ed 80%, #5a8db6 80%) 6px 100% / 51px 3px no-repeat; }
.app.current { background: linear-gradient(#76b9ed, #76b9ed) 0 100% / 62px 3px no-repeat #333435; }
.tray { width: 361px; flex: none; margin-left: auto; display: grid; grid-template-columns: 31px 30px 30px 30px 32px 28px 27px 70px 70px 13px; align-items: center; justify-items: center; padding-bottom: 1px; }
.clock { display: flex; flex-direction: column; line-height: 23px; font-size: 14.600px; letter-spacing: -.35px; white-space: nowrap; text-align: center; padding-left: 14px; }
.clock + svg { margin-left: 14px; }
.peek { width: 1px; height: 50px; background: #555; }

/* Scheduler window */
.dialog { position: absolute; left: 1272px; top: 374px; width: 640px; height: 648px; border: 1px solid #9297a4; background: #dfe5f5; box-shadow: 0 2px 12px rgba(0, 0, 0, .35); color: #000; }
.dialog header { height: 37px; background: #fff; color: #999; display: grid; grid-template-columns: 17px 458px 58px 59px 13px; padding-left: 10px; align-items: center; letter-spacing: -.1px; }
.dialog header span { padding: 0 0 2px 7px; }
.menu { height: 23px; background: #f0f0f0; padding-left: 9px; line-height: 23px; color: #222; }
.message { text-align: center; display: flex; flex-direction: column; align-items: center; }
.message h1 { margin: 0; font-size: 49px; font-weight: 400; line-height: 68px; letter-spacing: -.65px; }
.message p { margin: 0; width: 610px; font-size: 24px; line-height: 33px; letter-spacing: -.17px; }
.message h1 + p { margin-top: -1px; }
.message p + p { margin-top: 13px; }
.actions { display: flex; gap: 25px; margin-top: 24px; }
.actions span { width: 125px; height: 25px; border: 1px solid #707070; background: #ddd; line-height: 24px; letter-spacing: -.25px; }
.actions .disabled { width: 150px; border-color: #989aa1; background: #dfdfe4; color: #6b6d72; }
```
FILE: script.js
```js
// Visible columns: letter and width in pixels
const columns = [['A', 123], ['B', 123], ['I', 80], ['J', 93], ['K', 80], ['L', 80], ['M', 80], ['N', 93], ['O', 93], ['P', 93],
  ...['Q', 'R', 'S', 'T', 'U', 'V', 'W', 'X', 'Y', 'Z', 'AA'].map(n => [n, 80]), ['AB', 80]];
const rowHeights = [25, 25, 24, 25, 24, 25];

// last, first, choices for I / J / K, sessions 1-3 (B, T, M, S, H for the topic names)
const students = `England|Sarai|,3,|HST
Westberry|Nida|,1,2|MTS
Arellano|Doretta|,,3|MSH
Poirrier|Drema|,1,2|MST
Vroman|Jasmine|1,3,|BTS
Nemec|Layne|2,,1|MBH
Ryckman|Sid|,2,3|MST
Hendon|Darci|,1,|TSH
Salem|Dorotha|2,,3|SBM
Tacey|Filiberto|1,3,|BTH
Buis|Lanora|3,2,|BST
Yin|Tamika|,1,3|SMT
Slovak|Vanetta|,3,2|STM
Califano|Muriel|3,2,|HTB
Derose|Tobias|3,,|BHS
Verrill|Hedwig|,2,|THS
Isler|Humberto|2,1,3|MTB
Maire|Raylene|3,1,|BTS
Makela|Pamela|,2,3|MST
Costello|Hedy|3,1,2|TMB
Bunyard|Ka|2,,1|BHM
Dulin|Kristeen|1,,3|MSB
Rainville|Keiko|3,2,1|BTM`.split('\n').map(line => line.split('|'));
const topics = { B: 'Business', T: 'Technology', M: 'Medicine', S: 'Science', H: 'Math' };

const cell = (text = '', cls = '', attrs = '') => `<td class="${cls}" ${attrs}>${text}</td>`;
const blanks = n => cell().repeat(n);

const rows = [
  cell('', 'blue c-b', 'colspan="2" rowspan="4"') + cell('Business') + cell('Technology') + cell('Medicine') + blanks(5) +
    cell('Notes for teachers:', 'right bold note', 'colspan="2"') + cell('', '', 'colspan="4"') + blanks(6),
  cell('G105') + cell('G106') + cell('B107') + blanks(1) + cell('Number of sessions', 'right bold sessions', 'colspan="2"') +
    cell('3') + blanks(1) + cell('Notes for topics:', 'right bold note', 'colspan="2"') + cell('', '', 'colspan="4"') + blanks(6),
  cell('25') + cell('100') + cell('70') + blanks(17),
  blanks(20),
  cell('Last Name', 'left bold') + cell('First Name', 'left bold c-b') + cell('<span>nt choices go below</span>', 'clip note', 'colspan="3"') +
    blanks(2) + cell('Schedule', '', 'colspan="3"') + blanks(12),
  cell('Sample Student', 'left note') + cell('Sample Student', 'left c-b') + cell('3') + blanks(2) + cell('Count') + blanks(1) +
    [1, 2, 3].map(n => cell('Session ' + n, 'bold')).join('') + blanks(12),
  ...students.map(([last, first, picks, plan]) => cell(last, 'left') + cell(first, 'left c-b') +
    picks.split(',').map(p => cell(p)).join('') + cell('3', 'gray') + blanks(1) +
    [...plan].map(t => cell(topics[t])).join('') + blanks(12)),
  cell('', 'left') + cell('', 'c-b') + blanks(3) + cell('', 'gray') + blanks(16)
];

document.getElementById('grid').innerHTML =
  '<colgroup><col style="width:34px">' + columns.map(([, w]) => `<col style="width:${w}px">`).join('') + '</colgroup>' +
  '<thead><tr><th class="corner"></th>' + columns.map(([n]) => `<th class="${n === 'R' ? 'on' : n === 'B' ? 'c-b' : ''}">${n}</th>`).join('') + '</tr></thead><tbody>' +
  rows.map((r, i) => `<tr class="${i === 3 ? 'frozen' : ''}" style="height:${rowHeights[i] || 24}px"><th class="${i === 12 ? 'on' : ''}">${i < 29 ? i + 1 : ''}</th>${r}</tr>`).join('') + '</tbody>';
document.getElementById('grid').style.width = 34 + columns.reduce((sum, c) => sum + c[1], 0) + 'px';
```
